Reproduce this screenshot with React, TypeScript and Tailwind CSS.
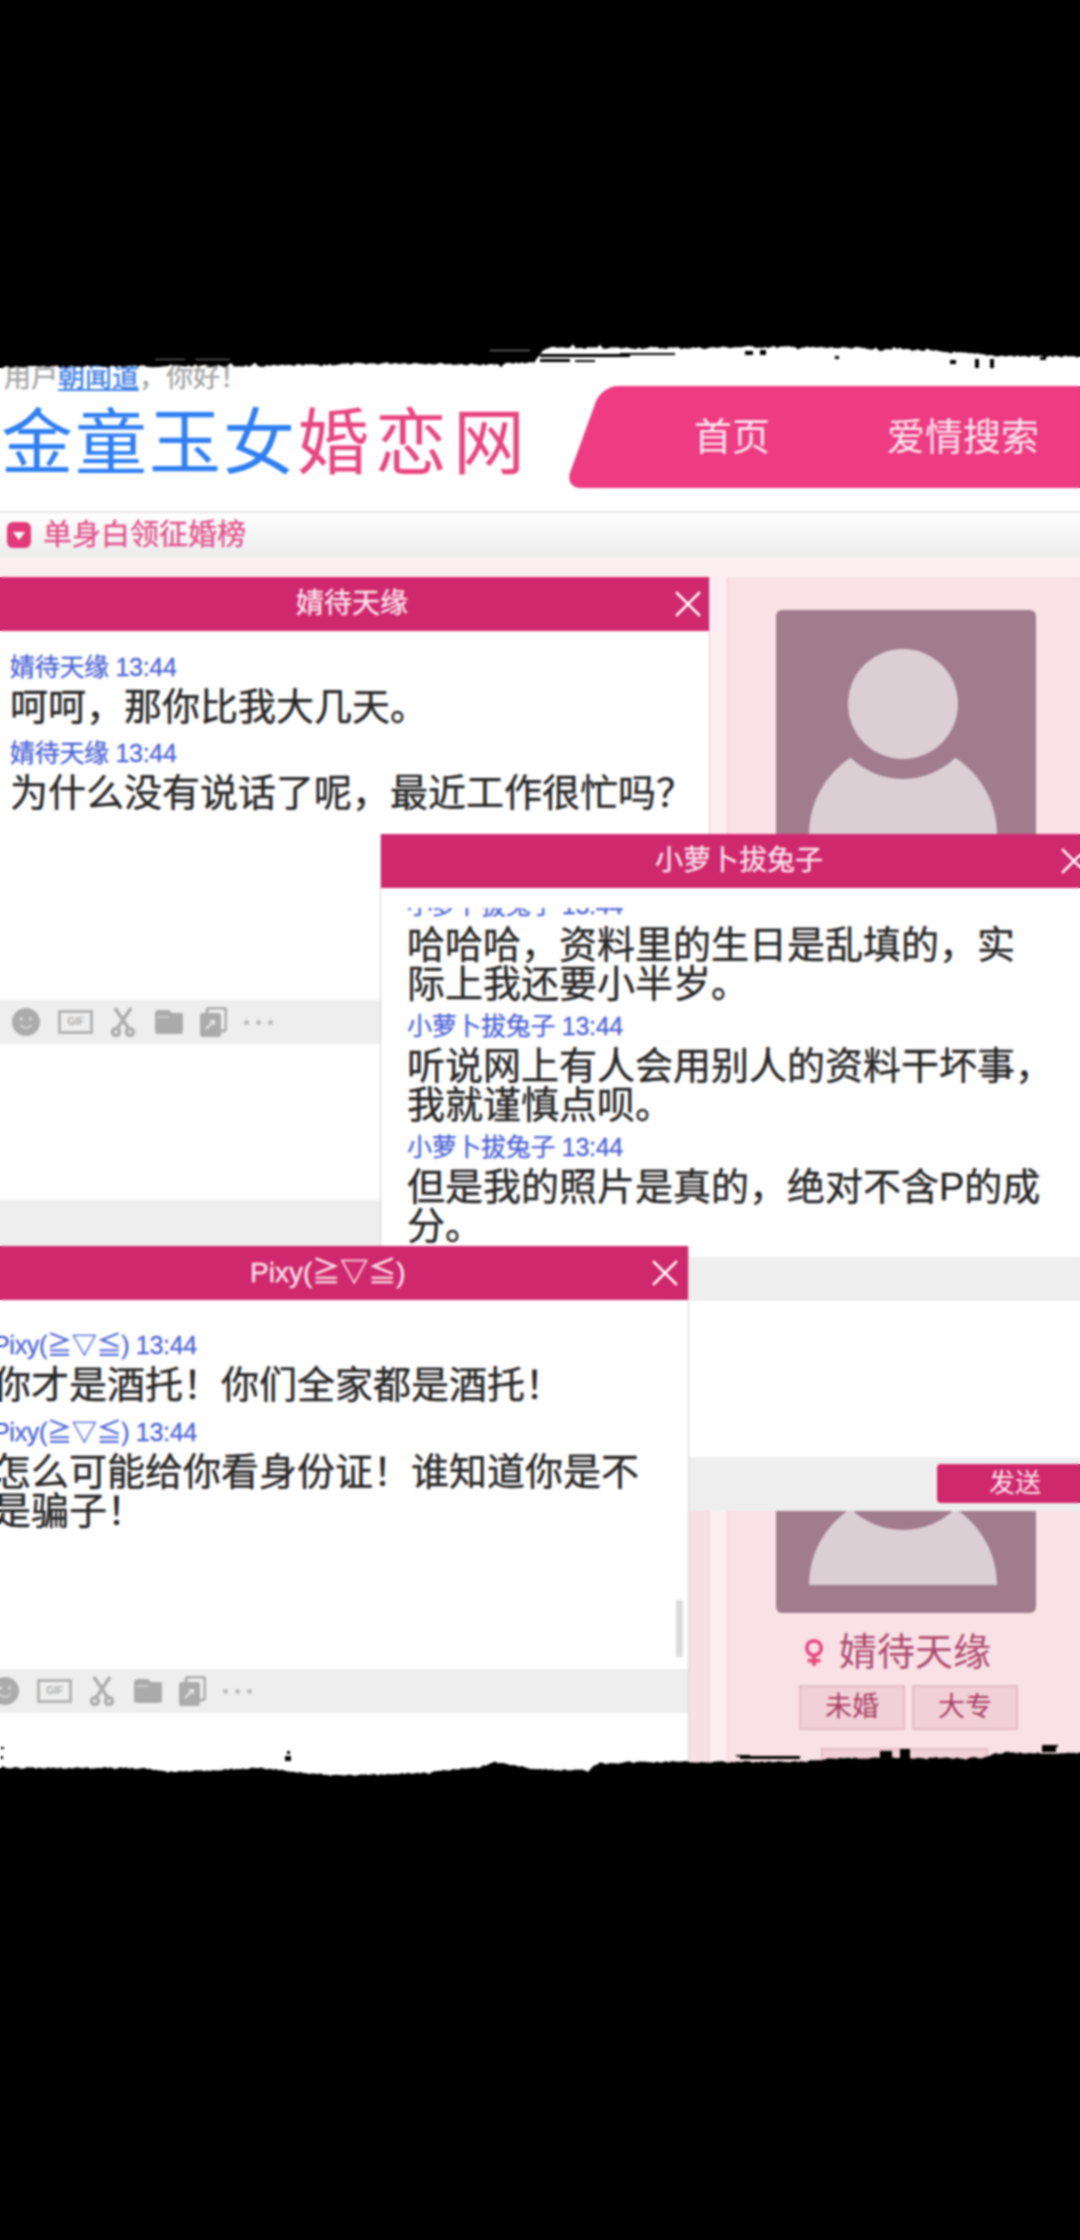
import React from "react";

const FONT = { fontFamily: '"Liberation Sans", "Noto Sans CJK SC", sans-serif' };

type ChatMsg = { name: string; lines: string[] };

// torn paper edge, made from a fixed seed so it stays the same on every render
const tornEdge = (base: [number, number][], amp: number, seed: number) => {
  let s = seed;
  const rnd = () => {
    s = (s * 9301 + 49297) % 233280;
    return s / 233280;
  };
  const pts: string[] = [];
  for (let x = 0; x <= 1080; x += 3) {
    let i = 0;
    while (i < base.length - 2 && base[i + 1][0] < x) i++;
    const [x0, y0] = base[i];
    const [x1, y1] = base[i + 1];
    const y = y0 + ((y1 - y0) * (x - x0)) / (x1 - x0);
    const r = rnd();
    pts.push(`${x},${(y + (r > 0.92 ? (rnd() - 0.5) * amp * 3 : (r - 0.5) * amp)).toFixed(1)}`);
  }
  return pts.join(" ");
};

const topEdge = tornEdge(
  [[0, 37], [180, 36], [270, 36], [400, 33], [490, 35], [535, 32], [545, 18], [700, 18], [750, 17], [840, 18], [900, 19], [1000, 26], [1080, 27]],
  2.5,
  17
);
const bottomEdge = tornEdge(
  [[0, 23], [140, 23], [170, 27], [260, 23], [325, 30], [380, 30], [430, 27], [480, 22], [495, 17], [540, 25], [590, 25], [595, 18], [640, 17], [800, 17], [840, 13], [980, 13], [1000, 8], [1060, 8], [1080, 8]],
  2,
  41
);

const Avatar = () => (
  <svg viewBox="0 0 260 252" className="w-[260px] h-[252px] shrink-0 rounded-md bg-[#a07c8c]">
    <path d="M33 224 A94 92 0 0 1 221 224 Z" fill="#dccfd3" />
    <circle cx="127" cy="94" r="75" fill="#a07c8c" />
    <circle cx="127" cy="94" r="55" fill="#dccfd3" />
  </svg>
);

const ToolIcons = () => (
  <div className="flex items-center">
    <svg viewBox="0 0 28 28" className="w-[28px] h-[28px]">
      <circle cx="14" cy="14" r="14" fill="#ababab" />
      <circle cx="9.5" cy="11" r="2" fill="#cfcfcf" />
      <circle cx="18.5" cy="11" r="2" fill="#cfcfcf" />
      <path d="M8 17 Q14 23 20 17" fill="none" stroke="#cfcfcf" strokeWidth="2" />
    </svg>
    <div className="ml-[18px] w-[35px] h-[24px] border-[3px] border-[#b4b4b4] flex items-center justify-center text-[10px] font-bold leading-none text-[#aeaeae]">
      GIF
    </div>
    <svg viewBox="0 0 26 30" className="ml-[17px] w-[26px] h-[30px]" fill="none" stroke="#adadad" strokeWidth="3.5">
      <path d="M5 1 L19 22 M21 1 L7 22" />
      <circle cx="6" cy="25" r="3.5" />
      <circle cx="20" cy="25" r="3.5" />
    </svg>
    <svg viewBox="0 0 28 24" className="ml-[19px] w-[28px] h-[24px]">
      <path d="M4 0 H14 L17 3 H26 Q28 3 28 5 V21 Q28 24 25 24 H3 Q0 24 0 21 V4 Q0 0 4 0 Z" fill="#ababab" />
      <path d="M2 7 H14" stroke="#d4d4d4" strokeWidth="1.5" />
    </svg>
    <svg viewBox="0 0 27 30" className="ml-[17px] w-[27px] h-[30px]">
      <rect x="7" y="1" width="19" height="23" rx="3" fill="none" stroke="#adadad" strokeWidth="3" />
      <rect x="0" y="6" width="21" height="24" rx="3" fill="#ababab" />
      <path d="M6 22 L14 14 M10 14 H14 V18" stroke="#e6e6e6" strokeWidth="2" fill="none" />
    </svg>
    <span className="ml-[17px] flex gap-[7px]">
      <i className="w-[5px] h-[5px] rounded-full bg-[#bcbcbc]" />
      <i className="w-[5px] h-[5px] rounded-full bg-[#bcbcbc]" />
      <i className="w-[5px] h-[5px] rounded-full bg-[#bcbcbc]" />
    </span>
  </div>
);

const ChatWindow = ({
  title,
  className,
  titleClass,
  padClass,
  toolClass,
  scrollClass,
  closeClass,
  gapClass,
  messages,
  children,
}: {
  title: string;
  className: string;
  titleClass: string;
  padClass: string;
  toolClass: string;
  scrollClass: string;
  closeClass: string;
  gapClass: string;
  messages: ChatMsg[];
  children?: React.ReactNode;
}) => (
  <div className={`absolute w-[718px] h-[677px] bg-white border-x border-[#d8d2d4] flex flex-col ${className}`}>
    <div className="h-[54px] shrink-0 bg-[#d0286d] relative flex items-center text-[#fbe6ee]">
      <span className={`absolute text-[28px] leading-none whitespace-nowrap [-webkit-text-stroke:0.3px] ${titleClass}`}>{title}</span>
      <svg viewBox="0 0 24 24" className={`absolute w-[26px] h-[26px] ${closeClass}`} fill="none" stroke="#fff" strokeWidth="2.4">
        <path d="M1 1 L23 23 M23 1 L1 23" />
      </svg>
    </div>
    <div className={`h-[369px] shrink-0 overflow-hidden ${padClass}`}>
      <div className={scrollClass}>
        {messages.map((m, i) => (
          <div key={i} className={gapClass}>
            <div className="h-[34px] text-[25px] leading-[34px] text-[#4a63d6] whitespace-nowrap [-webkit-text-stroke:0.3px] tracking-[-0.3px]">{m.name} 13:44</div>
            <div className="mt-1 w-[680px] text-[38px] leading-[39px] text-[#262626] [-webkit-text-stroke:0.4px]">
              {m.lines.map((l) => (
                <div key={l} className="whitespace-nowrap">{l}</div>
              ))}
            </div>
          </div>
        ))}
      </div>
    </div>
    <div className={`h-[44px] shrink-0 bg-[#eeeeee] flex items-center ${toolClass}`}>
      <ToolIcons />
    </div>
    <div className="h-[156px] shrink-0 bg-white" />
    <div className="h-[54px] shrink-0 bg-[#eeeeee] relative">{children}</div>
  </div>
);

export default function App() {
  return (
    <div className="w-[1080px] h-[2240px] bg-black relative overflow-hidden" style={FONT}>
      <div className="absolute left-0 top-[340px] w-[1080px] h-[1440px] bg-white overflow-hidden">
        {/* page behind the chat windows */}
        <div className="h-[171px] flex">
          <div className="w-[567px] shrink-0 pl-1 pt-[23px]">
            <div className="text-[27px] leading-[30px] text-[#a4a4a4] whitespace-nowrap [-webkit-text-stroke:0.4px]">
              用户<span className="text-[#3f7fe6] underline">朝闻道</span>，你好！
            </div>
            <div className="mt-[12px] -ml-[3px] text-[72px] leading-[76px] whitespace-nowrap">
              <span className="text-[#2f7ff2] tracking-[2px]">金童玉女</span>
              <span className="text-[#e8467f] tracking-[6px]">婚恋网</span>
            </div>
          </div>
          <div className="flex-1 relative mt-[46px] h-[102px] flex items-center text-[#fbe6ee] text-[38px] leading-none">
            <div className="absolute left-[16px] -right-[60px] inset-y-0 bg-[#ee3b82] rounded-2xl -skew-x-[20deg]" />
            <span className="relative ml-[127px]">首页</span>
            <span className="relative ml-[117px] whitespace-nowrap">爱情搜索</span>
          </div>
        </div>
        <div className="h-[46px] border-t-2 border-[#e6e6e6] bg-gradient-to-b from-white to-[#ececec] flex items-center pl-[7px]">
          <svg viewBox="0 0 24 26" className="w-[24px] h-[26px]">
            <rect width="24" height="26" rx="6" fill="#e23a78" />
            <path d="M6 10 H18 L12 18 Z" fill="#fff" />
          </svg>
          <span className="ml-[12px] text-[29px] leading-none text-[#e2508a] whitespace-nowrap [-webkit-text-stroke:0.3px]">单身白领征婚榜</span>
        </div>
        <div className="h-[1223px] bg-[#fdeef1] flex pt-[20px]">
          <div className="w-[710px] shrink-0 bg-[#f8dfe4] border-r border-[#f0d2da]" />
          <div className="ml-[17px] flex-1 bg-[#f9e1e6] border-l border-[#efd0d8] pt-[33px] pl-[48px]">
            <Avatar />
            <div className="mt-[499px]">
              <Avatar />
            </div>
            <div className="mt-[18px] ml-[27px] h-[42px] flex items-center text-[38px] leading-none text-[#ad4a6d]">
              <svg viewBox="0 0 24 32" className="w-[22px] h-[29px]" fill="none" stroke="#e5487f" strokeWidth="4">
                <circle cx="12" cy="11" r="8" />
                <path d="M12 19 V31 M5 25 H19" />
              </svg>
              <span className="ml-[14px] whitespace-nowrap">婧待天缘</span>
            </div>
            <div className="mt-[12px] ml-[23px] flex gap-[7px]">
              <div className="w-[106px] h-[45px] bg-[#f2d0d8] border-2 border-[#e2bcc6] flex items-center justify-center text-[27px] leading-none text-[#a63e61]">未婚</div>
              <div className="w-[106px] h-[45px] bg-[#f2d0d8] border-2 border-[#e2bcc6] flex items-center justify-center text-[27px] leading-none text-[#a63e61]">大专</div>
            </div>
            <div className="mt-[18px] ml-[45px] w-[167px] h-[45px] bg-[#f2d0d8] border-2 border-[#e2bcc6]" />
          </div>
        </div>

        <ChatWindow
          title="婧待天缘"
          className="left-[-8px] top-[237px]"
          titleClass="left-[303px]"
          closeClass="left-[682px]"
          padClass="pl-[17px]"
          toolClass="pl-[19px]"
          scrollClass="pt-[19px]"
          gapClass="mb-[9px]"
          messages={[
            { name: "婧待天缘", lines: ["呵呵，那你比我大几天。"] },
            { name: "婧待天缘", lines: ["为什么没有说话了呢，最近工作很忙吗？"] },
          ]}
        />
        <ChatWindow
          title="小萝卜拔兔子"
          className="left-[380px] top-[494px]"
          titleClass="left-[274px]"
          closeClass="left-[680px]"
          padClass="pl-[26px] mt-[20px] mb-[-20px]"
          toolClass="pl-[19px]"
          scrollClass="-mt-[20px]"
          gapClass="mb-[5px]"
          messages={[
            { name: "小萝卜拔兔子", lines: ["哈哈哈，资料里的生日是乱填的，实", "际上我还要小半岁。"] },
            { name: "小萝卜拔兔子", lines: ["听说网上有人会用别人的资料干坏事，", "我就谨慎点呗。"] },
            { name: "小萝卜拔兔子", lines: ["但是我的照片是真的，绝对不含P的成", "分。"] },
          ]}
        >
          <div className="absolute left-[556px] top-[7px] w-[160px] h-[39px] rounded-sm bg-[#d0286d] text-[#fbe6ee] text-[26px] leading-[39px] pl-[52px]">
            发送
          </div>
        </ChatWindow>
        <ChatWindow
          title="Pixy(≧▽≦)"
          className="left-[-29px] top-[906px]"
          titleClass="left-[278px]"
          closeClass="left-[680px]"
          padClass="pl-[21px]"
          toolClass="pl-[19px]"
          scrollClass="pt-[28px]"
          gapClass="mb-[10px]"
          messages={[
            { name: "Pixy(≧▽≦)", lines: ["你才是酒托！你们全家都是酒托！"] },
            { name: "Pixy(≧▽≦)", lines: ["怎么可能给你看身份证！谁知道你是不", "是骗子！"] },
          ]}
        />
        {/* scrollbar of the front window */}
        <div className="absolute left-[676px] top-[1260px] w-[7px] h-[57px] bg-[#dcdcdc]" />
      </div>

      {/* torn edges with their loose specks */}
      <svg className="absolute left-0 top-[330px] w-[1080px] h-[60px]" viewBox="0 0 1080 60">
        <polygon points={`0,0 ${topEdge} 1080,0`} fill="#000" />
        <rect x="540" y="24" width="90" height="3" fill="#000" />
        <rect x="620" y="23" width="55" height="2" fill="#000" />
        <rect x="540" y="29" width="30" height="3" fill="#000" />
        <rect x="575" y="30" width="20" height="2" fill="#000" />
        <rect x="745" y="21" width="8" height="4" fill="#000" />
        <rect x="760" y="20" width="6" height="5" fill="#000" />
        <rect x="835" y="26" width="4" height="3" fill="#000" />
        <rect x="950" y="30" width="6" height="4" fill="#000" />
        <rect x="975" y="29" width="4" height="9" fill="#000" />
        <rect x="990" y="29" width="4" height="9" fill="#000" />
        <rect x="1040" y="27" width="6" height="3" fill="#000" />
        <rect x="155" y="29" width="30" height="1" fill="#777" />
        <rect x="195" y="29" width="35" height="1" fill="#777" />
        <rect x="490" y="20" width="40" height="1" fill="#999" />
      </svg>
      <svg className="absolute left-0 top-[1745px] w-[1080px] h-[40px]" viewBox="0 0 1080 40">
        <polygon points={`0,40 ${bottomEdge} 1080,40`} fill="#000" />
        <rect x="736" y="10" width="14" height="1.5" fill="#000" />
        <rect x="740" y="11" width="60" height="3" fill="#000" />
        <rect x="880" y="6" width="12" height="8" fill="#000" />
        <rect x="900" y="4" width="10" height="10" fill="#000" />
        <rect x="1042" y="-1" width="14" height="8" fill="#000" />
        <rect x="1050" y="-4" width="8" height="6" fill="#000" />
        <rect x="285" y="11" width="6" height="5" fill="#000" />
        <rect x="287" y="6" width="3" height="3" fill="#000" />
        <rect x="1" y="2" width="3" height="2" fill="#000" />
        <rect x="1" y="11" width="2" height="3" fill="#000" />
      </svg>

      {/* the whole picture is a soft, low quality capture */}
      <div className="absolute inset-0 backdrop-blur-[1px]" />
    </div>
  );
}
